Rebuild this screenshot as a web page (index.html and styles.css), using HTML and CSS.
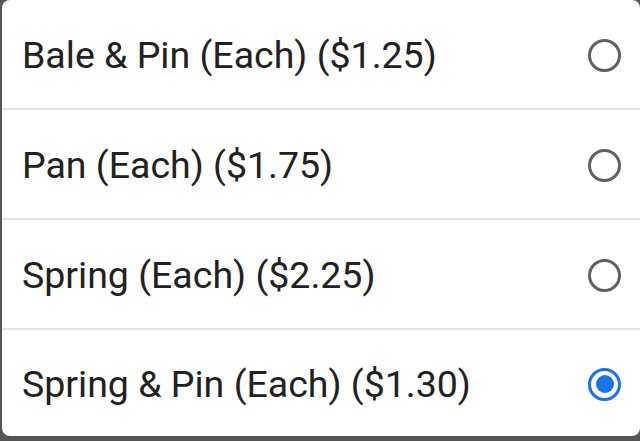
FILE: index.html
```html
<!DOCTYPE html>
<html>
<head>
<meta charset="utf-8">
<link rel="stylesheet" href="styles.css">
</head>
<body>
<div class="dialog">
  <div class="row"><span class="label">Bale &amp; Pin (Each) ($1.25)</span><span class="radio"></span></div>
  <div class="row"><span class="label">Pan (Each) ($1.75)</span><span class="radio"></span></div>
  <div class="row"><span class="label">Spring (Each) ($2.25)</span><span class="radio"></span></div>
  <div class="row last"><span class="label">Spring &amp; Pin (Each) ($1.30)</span><span class="radio checked"></span></div>
</div>
</body>
</html>
```
FILE: styles.css
```css
html, body {
  margin: 0;
  padding: 0;
  width: 640px;
  height: 441px;
  overflow: hidden;
  background: #555555;
}
.dialog {
  margin-left: 2px;
  width: 638px;
  height: 436px;
  background: #ffffff;
  border-radius: 8px;
  display: flex;
  flex-direction: column;
}
.row {
  flex: none;
  display: flex;
  align-items: center;
  justify-content: space-between;
  padding: 2px 19px 0 20px;
  box-sizing: border-box;
  height: 110px;
  border-bottom: 2px solid #e3e3e3;
}
.row.last {
  border-bottom: none;
  height: 106px;
}
.label {
  font-family: Roboto, "Liberation Sans", sans-serif;
  font-size: 37.5px;
  color: #212121;
  letter-spacing: 0;
}
.radio {
  width: 27px;
  height: 27px;
  border: 3.5px solid #616161;
  border-radius: 50%;
  box-sizing: content-box;
  display: flex;
  align-items: center;
  justify-content: center;
}
.radio.checked {
  border-color: #1a73e8;
}
.radio.checked::after {
  content: "";
  width: 18px;
  height: 18px;
  border-radius: 50%;
  background: #1a73e8;
}
```
